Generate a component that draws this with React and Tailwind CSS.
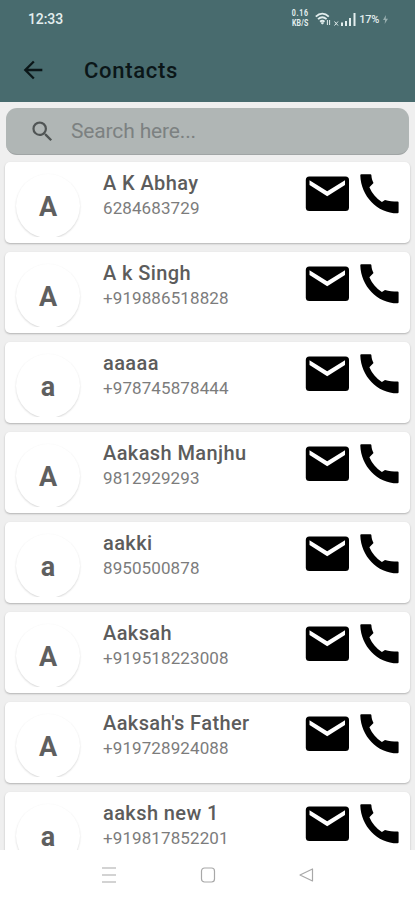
import React from 'react';
import { MdArrowBack, MdSearch } from 'react-icons/md';

const contacts = [
  { name: 'A K Abhay', phone: '6284683729' },
  { name: 'A k Singh', phone: '+919886518828' },
  { name: 'aaaaa', phone: '+978745878444' },
  { name: 'Aakash Manjhu', phone: '9812929293' },
  { name: 'aakki', phone: '8950500878' },
  { name: 'Aaksah', phone: '+919518223008' },
  { name: "Aaksah's Father", phone: '+919728924088' },
  { name: 'aaksh new 1', phone: '+919817852201' },
];

const MailIcon = () => (
  <svg className="h-[52px] w-[52px]" viewBox="0 0 52 52">
    <rect x="4.800" y="8.500" width="43.200" height="34.400" rx="3.500" fill="#000" />
    <path d="M8.500 12.300L26.200 23.200L44 12.300V17L26.200 28.200L8.500 17z" fill="#fff" />
  </svg>
);

const CallIcon = () => (
  <svg className="h-[52px] w-[52px]" viewBox="0 0 52 52" fill="#000">
    <path d="M8.300 6.300H17.400Q18.300 6.300 18.400 7.300C18.500 10 19.200 12.400 20.500 15L16.400 19.200C19.200 25.500 23 30.300 28.900 34L32 32C36 33 40 33.500 44.600 33.500Q45.600 33.500 45.600 34.600V44.300Q45.600 45.300 44.500 45.300C24 45 8 28 7.300 7.400Q7.300 6.300 8.300 6.300z" />
  </svg>
);

const StatusBar = () => (
  <div className="flex h-[38px] items-center justify-between pl-7 pr-[27px] text-[#e3eeee]">
    <span className="text-[14px] font-medium leading-none tracking-[-0.1px]">12:33</span>
    <div className="flex items-center">
      <div className="flex w-[18px] scale-y-[1.3] flex-col items-center text-[7px] font-bold leading-[7px]">
        <span className="tracking-[0.7px]">0.16</span>
        <span className="tracking-[0.2px]">KB/S</span>
      </div>
      <svg className="ml-[6px] h-[14px] w-4" viewBox="0 0 16 14" fill="none" stroke="currentColor" strokeWidth="1.8">
        <path d="M.8 4.600C4.800.8 9.800.8 13.800 4.600M3 7.200c2.800-2.500 5.800-2.500 8.600 0M5.100 9.700c1.500-1.300 2.900-1.300 4.400 0" />
        <path d="M6.300 10.800h2.200l-1.100 1.400zM12.400 8v5M14.600 8v5" strokeWidth="1" fill="currentColor" />
      </svg>
      <svg className="ml-[2px] h-[14px] w-6" viewBox="0 0 24 14" fill="currentColor">
        <path d="M1.500 9.500l3.500 4M5 9.500l-3.500 4" stroke="currentColor" strokeWidth="1" />
        <path d="M8 10.500h2V14H8zM12 9h2v5h-2zM16 6h2v8h-2zM20.500 1h2v13h-2z" />
      </svg>
      <span className="ml-[2px] text-[11px] font-medium leading-none tracking-[-0.3px]">17%</span>
      <svg className="ml-[4px] h-[11px] w-[5px] opacity-50" viewBox="0 0 6 11" fill="currentColor">
        <path d="M3.500 0L0 6h2.500L2 11l4-6.500H3.300z" />
      </svg>
    </div>
  </div>
);

const ContactCard = ({ contact }) => (
  <div className="flex h-[81px] shrink-0 rounded-[5px] bg-white pl-[7px] shadow-[0_1px_2px_rgba(0,0,0,0.26)]">
    {/* Avatar, its lower edge is cut by the row */}
    <div className="h-[75px] w-[72px] shrink-0 overflow-hidden px-1 pt-3">
      <div className="flex h-[64px] w-[64px] items-center justify-center rounded-full bg-white pt-[3px] text-[27px] font-bold text-[#5f5f5f] shadow-[0_1px_2px_rgba(0,0,0,0.16)]">
        {contact.name[0]}
      </div>
    </div>
    <div className="ml-[19px] grow pt-[9px]">
      <div className="whitespace-nowrap text-[20px] font-medium leading-[25px] tracking-[0.4px] text-[#5c5c5c]">{contact.name}</div>
      <div className="text-[17px] leading-[25px] tracking-[0.1px] text-[#7c7c7c]">{contact.phone}</div>
    </div>
    <div className="flex shrink-0 pr-[5px] pt-[6px]">
      <MailIcon />
      <CallIcon />
    </div>
  </div>
);

const NavBar = () => (
  <div className="flex h-[50px] shrink-0 items-center justify-between bg-white px-[101px] text-[#a8a8a8]">
    <svg className="h-4 w-4" viewBox="0 0 16 16" fill="none" stroke="currentColor" strokeWidth="1.2">
      <path d="M1 1h14M1 8h14M1 15h14" />
    </svg>
    <svg className="h-4 w-4" viewBox="0 0 16 16" fill="none" stroke="currentColor" strokeWidth="1.2">
      <rect x="1.500" y="1" width="13" height="14" rx="3" />
    </svg>
    <svg className="h-4 w-4" viewBox="0 0 16 16" fill="none" stroke="currentColor" strokeWidth="1.2" strokeLinejoin="round">
      <path d="M14.500 2v12L2 8z" />
    </svg>
  </div>
);

const App = () => {
  return (
    <div className="flex h-[900px] w-[415px] flex-col overflow-hidden bg-[#efefef] font-['Roboto',sans-serif]">
      <header className="h-[102px] shrink-0 bg-[#486b6e]">
        <StatusBar />
        <div className="flex h-[64px] items-center pl-[19px] text-[#0b1618]">
          <MdArrowBack className="h-7 w-7" />
          <h1 className="ml-[37px] pt-px text-[22px] font-medium tracking-[0.7px]">Contacts</h1>
        </div>
      </header>

      {/* Search */}
      <div className="mx-[6px] mt-[6px] flex h-[47px] shrink-0 items-center rounded-[11px] border-b border-[#a0a5a5] bg-[#b0b6b5] pl-[23px]">
        <MdSearch className="h-[27px] w-[27px] text-[#505555]" />
        <span className="ml-[15px] pt-px text-[21px] tracking-[-0.15px] text-[#7c8181]">Search here...</span>
      </div>

      {/* Contact list */}
      <main className="mt-[2px] flex min-h-0 grow flex-col gap-[9px] overflow-hidden px-[5px] pt-[5px]">
        {contacts.map((contact) => (
          <ContactCard key={contact.phone} contact={contact} />
        ))}
      </main>

      <NavBar />
    </div>
  );
};

export default App;
